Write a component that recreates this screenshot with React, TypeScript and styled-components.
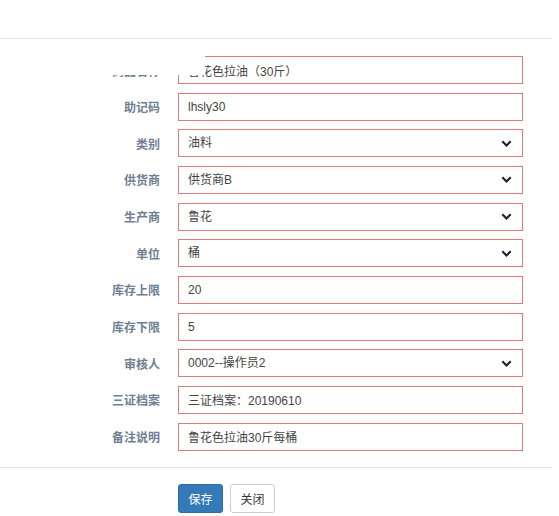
import React from "react";
import styled, { createGlobalStyle } from "styled-components";

const Global = createGlobalStyle`
  html, body { margin: 0; padding: 0; background: #fff; }
  body { font-family: "Liberation Sans", "Noto Sans CJK SC", sans-serif; }
  * { box-sizing: border-box; }
`;

const Modal = styled.div`
  width: 552px;
  background: #fff;
`;

const Header = styled.div`
  height: 39px;
  border-bottom: 1px solid #e5e5e5;
`;

const Body = styled.div`
  position: relative;
  padding: 17px 0 16px;
  display: flex;
  flex-direction: column;
  gap: 8.67px;
`;

const Mask = styled.div`
  position: absolute;
  left: 0;
  top: 0;
  width: 205px;
  height: 36px;
  background: #fff;
`;

const Row = styled.div`
  display: grid;
  grid-template-columns: 160px 345px;
  column-gap: 18px;
  align-items: center;
  height: 28px;
`;

const Label = styled.label`
  text-align: right;
  font-size: 12px;
  font-weight: 700;
  color: #6f8093;
  font-family: "Noto Sans CJK SC", sans-serif;
`;

const fieldCss = `
  width: 345px;
  height: 28px;
  border: 1px solid #e07a7a;
  border-radius: 0;
  padding: 0 9px;
  font-size: 12px;
  color: #444444;
  background-color: #fff;
  font-family: "Liberation Sans", "Noto Sans CJK SC", sans-serif;
  outline: none;
`;

const Input = styled.input`
  ${fieldCss}
`;

const chevron =
  "url(\"data:image/svg+xml,%3Csvg xmlns='http://www.w3.org/2000/svg' width='11' height='7' viewBox='0 0 11 7'%3E%3Cpath d='M1.3 1.3 L5.5 5.5 L9.7 1.3' fill='none' stroke='%231b1f33' stroke-width='2.1'/%3E%3C/svg%3E\")";

const Select = styled.select`
  ${fieldCss}
  appearance: none;
  -webkit-appearance: none;
  background-image: ${chevron};
  background-repeat: no-repeat;
  background-position: right 10px center;
  background-size: 11px 7px;
`;

const Footer = styled.div`
  border-top: 1px solid #e5e5e5;
  padding: 16px 0 0 178px;
  display: flex;
  gap: 7px;
`;

const Button = styled.button<{ $primary?: boolean }>`
  width: 45px;
  height: 29px;
  border-radius: 3px;
  font-size: 12px;
  font-family: "Noto Sans CJK SC", sans-serif;
  padding: 0;
  border: 1px solid ${(p) => (p.$primary ? "#2e6da4" : "#cccccc")};
  background: ${(p) => (p.$primary ? "#337ab7" : "#ffffff")};
  color: ${(p) => (p.$primary ? "#ffffff" : "#333333")};
`;

type Field = { label: string; value: string; select?: boolean };

const fields: Field[] = [
  { label: "商品名称", value: "鲁花色拉油（30斤）" },
  { label: "助记码", value: "lhsly30" },
  { label: "类别", value: "油料", select: true },
  { label: "供货商", value: "供货商B", select: true },
  { label: "生产商", value: "鲁花", select: true },
  { label: "单位", value: "桶", select: true },
  { label: "库存上限", value: "20" },
  { label: "库存下限", value: "5" },
  { label: "审核人", value: "0002--操作员2", select: true },
  { label: "三证档案", value: "三证档案：20190610" },
  { label: "备注说明", value: "鲁花色拉油30斤每桶" },
];

export default function App() {
  return (
    <Modal>
      <Global />
      <Header />
      <Body>
        {fields.map((f) => (
          <Row key={f.label}>
            <Label>{f.label}</Label>
            {f.select ? (
              <Select defaultValue={f.value}>
                <option value={f.value}>{f.value}</option>
              </Select>
            ) : (
              <Input defaultValue={f.value} readOnly />
            )}
          </Row>
        ))}
        <Mask />
      </Body>
      <Footer>
        <Button $primary>保存</Button>
        <Button>关闭</Button>
      </Footer>
    </Modal>
  );
}
